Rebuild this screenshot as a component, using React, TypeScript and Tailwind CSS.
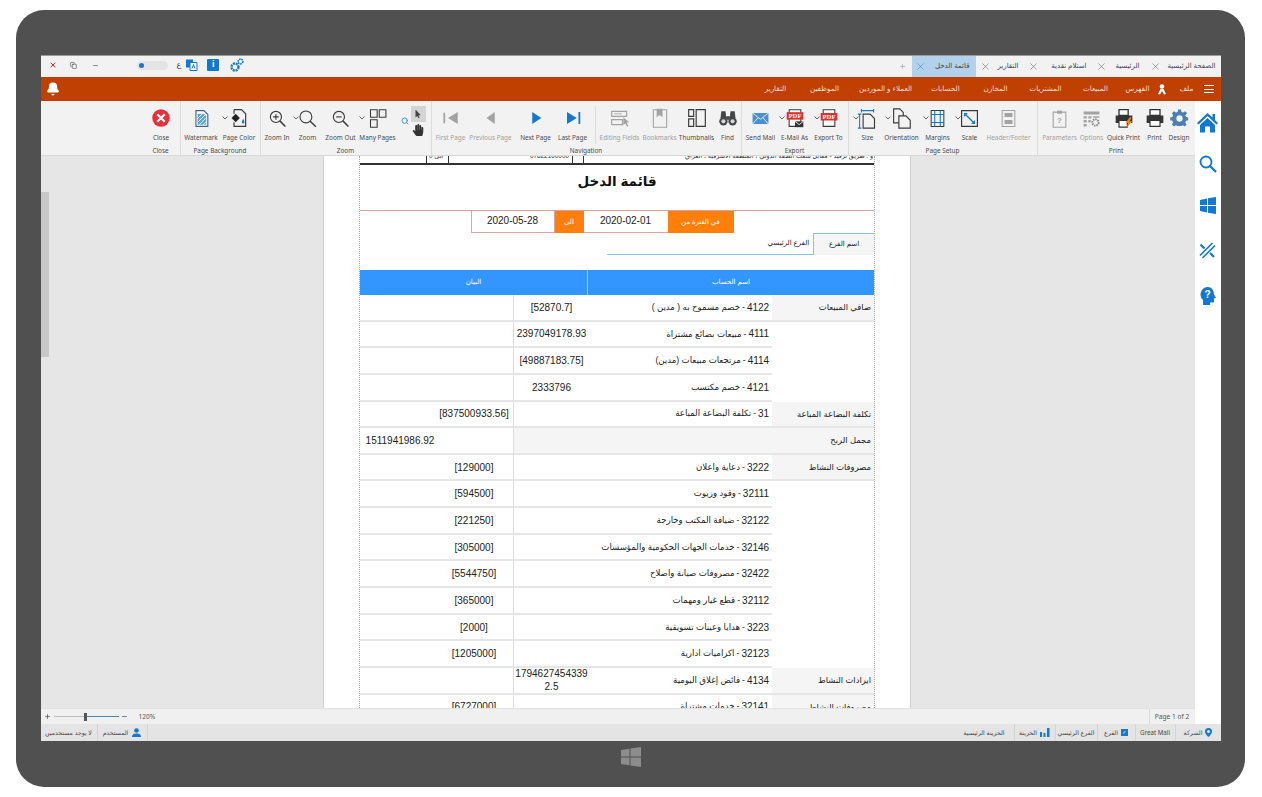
import { ReactNode } from "react";
import { Bell, Plus, Search, X, Minus, Copy } from "lucide-react";
import { FaHandPaper, FaMousePointer } from "react-icons/fa";

const BLUE = "#1278d0";
const DARK = "#3a3a3a";
const GREY = "#a3a3a3";

function Glyph({ children, size = 19 }: { children: ReactNode; size?: number }) {
  return (
    <svg width={size} height={size} viewBox="0 0 24 24" fill="none">
      {children}
    </svg>
  );
}

const Doc = ({ stroke = DARK }: { stroke?: string }) => <path d="M5 2h10l5 5v15H5z" stroke={stroke} strokeWidth="1.4" fill="#fff" />;

const icons: Record<string, ReactNode> = {
  close: (
    <Glyph size={20}>
      <circle cx="12" cy="12" r="10.5" fill="#e8303a" />
      <path d="M7.500 7.500l9 9M16.500 7.500l-9 9" stroke="#fff" strokeWidth="2.600" />
    </Glyph>
  ),
  watermark: (
    <Glyph>
      <Doc stroke="#44617a" />
      <path d="M7 6h8l3 3v11H7z" fill="#5aa6e6" />
      <path d="M7 12l6-6M7 17l10-10M9 20l9-9M14 20l4-4" stroke="#fff" strokeWidth="1.1" />
    </Glyph>
  ),
  pageColor: (
    <Glyph size={20}>
      <path d="M6 2h9l5 5v15H6V17M6 7V2" stroke={DARK} strokeWidth="1.4" />
      <path d="M8 7l5 5-5 5-5-5z" fill="#222" />
      <path d="M17 13c1 2 1.500 3 1.500 4a1.500 1.500 0 0 1-3 0c0-1 .5-2 1.500-4z" fill={BLUE} />
    </Glyph>
  ),
  zoomIn: (
    <Glyph>
      <circle cx="10" cy="10" r="7" stroke={DARK} strokeWidth="1.4" />
      <path d="M15 15l7 7" stroke={DARK} strokeWidth="1.8" />
      <path d="M6.500 10h7M10 6.500v7" stroke={DARK} strokeWidth="1.4" />
    </Glyph>
  ),
  zoom: (
    <Glyph>
      <circle cx="10" cy="10" r="7.500" stroke={DARK} strokeWidth="1.4" />
      <path d="M15.500 15.500l7 7" stroke={DARK} strokeWidth="1.8" />
    </Glyph>
  ),
  zoomOut: (
    <Glyph>
      <circle cx="10" cy="10" r="7" stroke={DARK} strokeWidth="1.4" />
      <path d="M15 15l7 7" stroke={DARK} strokeWidth="1.8" />
      <path d="M6.500 10h7" stroke={DARK} strokeWidth="1.4" />
    </Glyph>
  ),
  many: (
    <Glyph size={20}>
      <path d="M3 2h8v9H3zM13.500 2h8v9h-8zM3 14h8v9H3z" stroke={DARK} strokeWidth="1.3" />
    </Glyph>
  ),
  first: (
    <Glyph size={18}>
      <path d="M3 5v14" stroke={GREY} strokeWidth="2.400" />
      <path d="M21 4v16L8 12z" fill={GREY} />
    </Glyph>
  ),
  prev: (
    <Glyph size={18}>
      <path d="M17 4v16L6 12z" fill={GREY} />
    </Glyph>
  ),
  next: (
    <Glyph size={18}>
      <path d="M7 4v16l12-8z" fill={BLUE} />
    </Glyph>
  ),
  last: (
    <Glyph size={18}>
      <path d="M4 4v16l13-8z" fill={BLUE} />
      <path d="M20.500 4v16" stroke={BLUE} strokeWidth="2.400" />
    </Glyph>
  ),
  editing: (
    <Glyph size={20}>
      <path d="M2 4h18v6H2zM2 14h13v6H2z" stroke={GREY} strokeWidth="1.4" />
      <path d="M5 7h9" stroke={GREY} />
      <path d="M16 11l7 6-3 .5 2 4-1.500 1-2-4-2.500 2z" fill={GREY} />
    </Glyph>
  ),
  bookmark: (
    <Glyph size={20}>
      <path d="M4 2h16v21H4z" stroke={GREY} strokeWidth="1.3" />
      <path d="M8 1h7v10l-3.500-2.500L8 11z" fill={GREY} />
    </Glyph>
  ),
  thumbs: (
    <Glyph size={20}>
      <path d="M2 2h6v8H2zM2 13h6v9H2zM11 2h11v20H11z" stroke={DARK} strokeWidth="1.4" />
    </Glyph>
  ),
  find: (
    <Glyph size={20}>
      <circle cx="6.500" cy="16" r="5" fill="#444" />
      <circle cx="17.500" cy="16" r="5" fill="#444" />
      <path d="M4 4h5l1 8H3zM15 4h5l1 8h-7zM10 10h4v4h-4z" fill="#444" />
      <circle cx="6.500" cy="16" r="2.500" fill="#cfd8df" />
      <circle cx="17.500" cy="16" r="2.500" fill="#cfd8df" />
    </Glyph>
  ),
  mail: (
    <Glyph>
      <path d="M2 5h20v14H2z" fill="#4a8fd0" />
      <path d="M2 5l10 8 10-8M2 19l7-8M22 19l-7-8" stroke="#fff" strokeWidth="1" />
    </Glyph>
  ),
  mailAs: (
    <Glyph size={20}>
      <path d="M5 2h14v20H5z" stroke={DARK} strokeWidth="1.3" fill="#fff" />
      <path d="M2 5h20v9H2z" fill="#df2f2f" />
      <text x="12" y="12.500" textAnchor="middle" fontSize="8" fontWeight="700" fill="#fff" fontFamily="Liberation Serif, serif">PDF</text>
      <path d="M12 16h10v7H12z" fill="#333" />
      <path d="M12 16l5 4 5-4" stroke="#fff" strokeWidth="1" />
    </Glyph>
  ),
  exportTo: (
    <Glyph size={20}>
      <path d="M5 2h14v20H5z" stroke={DARK} strokeWidth="1.3" fill="#fff" />
      <path d="M2 6h20v9H2z" fill="#df2f2f" />
      <text x="12" y="13.500" textAnchor="middle" fontSize="8" fontWeight="700" fill="#fff" fontFamily="Liberation Serif, serif">PDF</text>
    </Glyph>
  ),
  size: (
    <Glyph size={21}>
      <path d="M5 1v4M19 1v4M5 3h14" stroke={BLUE} strokeWidth="1.2" />
      <path d="M1 7h4M1 23h4M3 7v16" stroke={BLUE} strokeWidth="1.2" />
      <path d="M7 7h8l5 5v11H7z" stroke={DARK} strokeWidth="1.3" />
    </Glyph>
  ),
  orientation: (
    <Glyph size={21}>
      <path d="M3 1h7l4 4v12H3z" stroke={DARK} strokeWidth="1.3" />
      <path d="M9 9h8l5 5v9H9z" stroke={DARK} strokeWidth="1.3" fill="#f2f2f2" />
    </Glyph>
  ),
  margins: (
    <Glyph>
      <path d="M4 2h16v20H4z" stroke={DARK} strokeWidth="1.3" />
      <path d="M4 7h16M4 17h16M8.500 2v20M15.500 2v20" stroke={BLUE} strokeWidth="1.3" />
    </Glyph>
  ),
  scale: (
    <Glyph>
      <path d="M2 2h20v20H2z" stroke={DARK} strokeWidth="1.5" />
      <path d="M6 6l12 12" stroke={BLUE} strokeWidth="1.5" />
      <path d="M5 5h5L5 10zM19 19h-5l5-5z" fill={BLUE} />
    </Glyph>
  ),
  header: (
    <Glyph>
      <path d="M4 2h16v20H4z" stroke={GREY} strokeWidth="1.3" />
      <path d="M7 5h10v5H7zM7 14h10v5H7z" fill={GREY} />
    </Glyph>
  ),
  params: (
    <Glyph>
      <path d="M4 4h16v19H4z" stroke={GREY} strokeWidth="1.4" />
      <path d="M9 2h6v4H9z" fill={GREY} />
      <text x="12" y="18" textAnchor="middle" fontSize="10" fontWeight="700" fill={GREY} fontFamily="Liberation Sans, sans-serif">?</text>
    </Glyph>
  ),
  options: (
    <Glyph>
      <path d="M2 3h20v4H2zM2 9h4v3H2zM8 9h4v3H8zM14 9h8v2h-8zM2 14h4v3H2zM8 14h3v3H8zM2 19h4v3H2z" fill={GREY} />
      <circle cx="17" cy="17" r="4" stroke="#8a8a8a" strokeWidth="2.400" strokeDasharray="2 1" />
    </Glyph>
  ),
  quick: (
    <Glyph size={20}>
      <path d="M6 2h11v7H6z" stroke="#333" strokeWidth="1.6" fill="#fff" />
      <path d="M2 9h20v9H2z" fill="#333" />
      <path d="M6 15h10v8H6z" stroke="#333" strokeWidth="1.4" fill="#fff" />
      <path d="M19 11l-5 7h3l-2 6 7-8h-3l2-5z" fill="#f08a1d" />
    </Glyph>
  ),
  print: (
    <Glyph size={20}>
      <path d="M6 2h12v7H6z" stroke="#333" strokeWidth="1.6" fill="#fff" />
      <path d="M2 9h20v9H2z" fill="#333" />
      <path d="M6 15h12v7H6z" stroke="#333" strokeWidth="1.4" fill="#fff" />
    </Glyph>
  ),
  design: (
    <Glyph size={21}>
      <path
        d="M10 1h4l.7 3.200 2.300 1 2.800-1.800 2.800 2.800L20 9l1 2.300 3 .7v4l-3 .7-1 2.300 1.800 2.800-2.800 2.800L17 22.800l-2.300 1L14 24h-4l-.7-.2L7 22.800l-2.800 1.800-2.800-2.800L3 19l-1-2.300-3-.7v-4l3-.7L3 9 1.400 6.200l2.800-2.800L7 5.200l2.300-1z"
        transform="translate(2.200 1) scale(.82)"
        fill="#4c7fb3"
      />
      <circle cx="12" cy="12" r="3.600" fill="#f2f2f2" />
    </Glyph>
  ),
};

function Item({ w, icon, label, muted, chevron }: { w: number; icon: string; label: string; muted?: boolean; chevron?: number }) {
  return (
    <div className="relative flex shrink-0 flex-col items-center" style={{ width: w }}>
      <div className="flex h-[24px] items-center justify-center">{icons[icon]}</div>
      <span className={`mt-[3px] whitespace-nowrap text-[6.4px] leading-[9px] ${muted ? "text-[#a0a0a0]" : "text-[#4a4a4a]"}`}>{label}</span>
      {chevron !== undefined && (
        <svg className="absolute top-[10px]" style={{ left: chevron - 3 }} width="6" height="4" viewBox="0 0 6 4" fill="none">
          <path d="M.5.5L3 3 5.500.5" stroke="#555" strokeWidth=".9" />
        </svg>
      )}
    </div>
  );
}

function Group({ w, label, children }: { w: number; label: string; children: ReactNode }) {
  return (
    <div className="flex h-full shrink-0 flex-col border-r border-[#dcdcdc] pt-[5px]" style={{ width: w }}>
      <div className="flex h-[40px]">{children}</div>
      <div className="text-center text-[6.4px] leading-[9px] text-[#4a4a4a]">{label}</div>
    </div>
  );
}

function Ribbon() {
  return (
    <div className="flex h-[55px] border-b border-[#d8d8d8] bg-[#f2f2f2] pl-[101px] font-['Noto_Sans','Liberation_Sans',sans-serif]">
      <Group w={39} label="Close">
        <Item w={39} icon="close" label="Close" />
      </Group>
      <Group w={80} label="Page Background">
        <Item w={41} icon="watermark" label="Watermark" />
        <Item w={35} icon="pageColor" label="Page Color" chevron={3} />
      </Group>
      <Group w={171} label="Zoom">
        <Item w={33} icon="zoomIn" label="Zoom In" />
        <Item w={28} icon="zoom" label="Zoom" chevron={2} />
        <Item w={38} icon="zoomOut" label="Zoom Out" />
        <Item w={36} icon="many" label="Many Pages" chevron={2} />
        <div className="flex w-[36px] items-start pl-[4px]">
          <div className="mt-[11px] flex w-[11px] justify-center">
            <Search size={8} color="#4b8fd0" strokeWidth={3} />
          </div>
          <div className="flex flex-col items-center">
            <div className="flex h-[16px] w-[15px] items-center justify-center bg-[#d4d4d4]">
              <FaMousePointer size={8} color="#444" />
            </div>
            <FaHandPaper size={12} className="mt-[2px]" color="#333" />
          </div>
        </div>
      </Group>
      <Group w={310} label="Navigation">
        <Item w={38} icon="first" label="First Page" muted />
        <Item w={42} icon="prev" label="Previous Page" muted />
        <Item w={48} icon="next" label="Next  Page" />
        <Item w={26} icon="last" label="Last  Page" />
        <div className="mb-[2px] ml-[9px] w-px bg-[#dcdcdc]" />
        <Item w={48} icon="editing" label="Editing Fields" muted />
        <Item w={32} icon="bookmark" label="Bookmarks" muted />
        <Item w={42} icon="thumbs" label="Thumbnails" />
        <Item w={20} icon="find" label="Find" />
      </Group>
      <Group w={107} label="Export">
        <Item w={38} icon="mail" label="Send Mail" />
        <Item w={30} icon="mailAs" label="E-Mail As" chevron={2} />
        <Item w={38} icon="exportTo" label="Export To" chevron={7} />
      </Group>
      <Group w={189} label="Page Setup">
        <Item w={38} icon="size" label="Size" chevron={7} />
        <Item w={30} icon="orientation" label="Orientation" chevron={1} />
        <Item w={42} icon="margins" label="Margins" chevron={9} />
        <Item w={22} icon="scale" label="Scale" chevron={-1} />
        <Item w={56} icon="header" label="Header/Footer" muted />
      </Group>
      <div className="flex h-full w-[157px] shrink-0 flex-col pt-[5px]">
        <div className="flex h-[40px]">
          <Item w={44} icon="params" label="Parameters" muted />
          <Item w={20} icon="options" label="Options" muted />
          <Item w={44} icon="quick" label="Quick Print" />
          <Item w={18} icon="print" label="Print" />
          <Item w={31} icon="design" label="Design" />
        </div>
        <div className="text-center text-[6.4px] leading-[9px] text-[#4a4a4a]">Print</div>
      </div>
    </div>
  );
}

type Row = { label?: string; code?: string; account?: string; value: string; col: 1 | 2 | 3; wide?: boolean };

const rows: Row[] = [
  { label: "صافي المبيعات", code: "4122", account: "خصم مسموح به ( مدين )", value: "[52870.7]", col: 3 },
  { code: "4111", account: "مبيعات بضائع مشتراة", value: "2397049178.93", col: 3 },
  { code: "4114", account: "مرتجعات مبيعات  (مدين)", value: "[49887183.75]", col: 3 },
  { code: "4121", account: "خصم مكتسب", value: "2333796", col: 3 },
  { label: "تكلفة البضاعة المباعة", code: "31", account: "تكلفة البضاعة المباعة", value: "[837500933.56]", col: 2 },
  { label: "مجمل الربح", value: "1511941986.92", col: 1, wide: true },
  { label: "مصروفات النشاط", code: "3222", account: "دعاية واعلان", value: "[129000]", col: 2 },
  { code: "32111", account: "وقود وزيوت", value: "[594500]", col: 2 },
  { code: "32122", account: "ضيافة المكتب وخارجة", value: "[221250]", col: 2 },
  { code: "32146", account: "خدمات الجهات الحكومية والمؤسسات", value: "[305000]", col: 2 },
  { code: "32422", account: "مصروفات صيانة واصلاح", value: "[5544750]", col: 2 },
  { code: "32112", account: "قطع غيار ومهمات", value: "[365000]", col: 2 },
  { code: "3223", account: "هدايا وعينات تسويقية", value: "[2000]", col: 2 },
  { code: "32123", account: "اكراميات ادارية", value: "[1205000]", col: 2 },
  { label: "ايرادات النشاط", code: "4134", account: "فائض إغلاق اليومية", value: "17946274543392.5", col: 3 },
  { label: "مصروفات النشاط", code: "32141", account: "خدمات مشتراة", value: "[6727000]", col: 2 },
];

function ValueCell({ w, value, className = "" }: { w: number; value?: string; className?: string }) {
  return (
    <div className={`flex shrink-0 items-center justify-center break-all text-center leading-[13px] ${className}`} style={{ width: w }}>
      {value}
    </div>
  );
}

function ReportRow({ row }: { row: Row }) {
  return (
    <div className="flex h-[26.65px] shrink-0 text-[10px] text-[#222]">
      <div className="flex w-[413px] border-b-2 border-[#e6e6e6]">
        <ValueCell w={75} value={row.col === 1 ? row.value : ""} className="pl-[5px]" />
        <ValueCell w={78} value={row.col === 2 ? row.value : ""} />
        {row.wide ? (
          <div className="flex-1 border-l border-[#dcdcdc] bg-[#f5f5f5]" />
        ) : (
          <div className="flex flex-1 border-l border-[#dcdcdc]">
            <ValueCell w={75} value={row.col === 3 ? row.value : ""} />
            <div dir="rtl" className="flex flex-1 items-center whitespace-nowrap pr-[3px] text-[8.6px]">
              <span className="text-[10px]">{row.code}</span>
              <span className="mx-[2px]">-</span>
              {row.account}
            </div>
          </div>
        )}
      </div>
      <div
        dir="rtl"
        className={`flex w-[102px] items-center pr-[3px] text-[8.4px] ${row.label ? "border-b-2 border-[#e6e6e6] bg-[#f5f5f5]" : ""}`}
      >
        {row.label}
      </div>
    </div>
  );
}

function Report() {
  return (
    <div className="flex h-full w-[516px] flex-col overflow-hidden border-x border-dotted border-[#aaa]">
      <div className="flex h-[9px] shrink-0 overflow-hidden border-b-2 border-[#333] text-[6.4px] leading-[9px] text-[#333]">
        <div className="w-[67px] border-r border-[#333]" />
        <div className="w-[22px] border-r border-[#333] pl-[2px] -mt-[5px]">الى 0</div>
        <div className="w-[124px] border-r border-[#333] pr-[3px] text-right -mt-[5px]">07822100000</div>
        <div className="w-[11px] border-r border-[#333]" />
        <div dir="rtl" className="flex-1 whitespace-nowrap pr-[1px] -mt-[5px]">و : طريق ترقيد - مقابل شعب الصفة الدولي ، المنطقة الاشرقية ، العراق</div>
      </div>
      <div dir="rtl" className="h-[45px] shrink-0 pt-[6px] text-center text-[13.5px] font-semibold leading-[22px] text-[#111]">
        قائمة الدخل
      </div>
      <div className="flex h-[23px] shrink-0 justify-center border-t border-[#d9a0a0] pr-[30px] text-[10px] text-[#222]">
        <div className="flex w-[84px] items-center justify-center border border-t-0 border-[#d8a8a0] pb-[2px]">2020-05-28</div>
        <div className="flex w-[29px] items-center justify-center bg-[#ff7f0a] text-[7px] text-[#fff]">الى</div>
        <div className="flex w-[84px] items-center justify-center border-b border-[#d8a8a0] pb-[2px]">2020-02-01</div>
        <div className="flex w-[66px] items-center justify-center bg-[#ff7f0a] text-[6.8px] text-[#fff]">في الفترة من</div>
      </div>
      <div className="flex h-[22px] shrink-0 pl-[247px] text-[7px] text-[#222]">
        <div className="flex w-[207px] items-center justify-end border-b border-[#8fc0f0] pr-[4px]">الفرع الرئيسي</div>
        <div className="flex w-[61px] items-center justify-center border-l border-t border-[#8fc0f0] bg-[#f5f5f5]">اسم الفرع</div>
      </div>
      <div className="mt-[15px] flex h-[25px] shrink-0 bg-[#3396ff] text-[7px] text-[#fff]">
        <div className="flex w-[228px] items-center justify-center border-r border-[#9ccbff]">البيان</div>
        <div className="flex flex-1 items-center justify-center">اسم الحساب</div>
      </div>
      {rows.map((row) => (
        <ReportRow key={row.value} row={row} />
      ))}
    </div>
  );
}

const tabs: { label: string; w: number; pr: number }[] = [
  { label: "التقارير", w: 48, pr: 9 },
  { label: "استلام نقدية", w: 68, pr: 9 },
  { label: "الرئيسية", w: 54, pr: 10 },
  { label: "الصفحة الرئيسية", w: 71, pr: 5 },
];

function TabBar() {
  return (
    <div className="flex h-[21px] shrink-0 items-center bg-[#f2f2f2] text-[#444]">
      <div className="mb-[3px] flex items-center">
        <div className="flex w-[22px] justify-center pl-[2px]">
          <X size={8} color="#c0302a" strokeWidth={3} />
        </div>
        <div className="flex w-[22px] justify-center">
          <Copy size={7} strokeWidth={2} />
        </div>
        <div className="flex w-[22px] justify-center">
          <Minus size={7} strokeWidth={2} />
        </div>
        <div className="ml-[30px] flex h-[9px] w-[31px] items-center rounded-full bg-[#e4e4e4] pl-[2px]">
          <div className="h-[5px] w-[5px] rounded-full bg-[#1278d0]" />
        </div>
        <span className="ml-[9px] text-[8px]">ع</span>
        <svg className="ml-[4px]" width="13" height="14" viewBox="0 0 13 13">
          <path d="M1 1h7v8H1z" fill="#1278d0" />
          <path d="M5 4h7v8H5z" fill="#fff" stroke="#1278d0" />
          <path d="M7 10l1.500-4L10 10" stroke="#1278d0" fill="none" />
        </svg>
        <div className="ml-[9px] flex h-[12px] w-[12px] items-center justify-center rounded-[1px] bg-[#1278d0] text-[9px] font-bold text-[#fff]">i</div>
        <svg className="ml-[10px]" width="16" height="16" viewBox="0 0 16 16" fill="none" stroke="#1278d0">
          <circle cx="6" cy="10" r="3.500" strokeWidth="2.400" strokeDasharray="2 .8" />
          <circle cx="11.500" cy="4.500" r="2.400" strokeWidth="1.600" strokeDasharray="1.500 .7" />
        </svg>
      </div>
      <div className="ml-auto flex h-full items-center text-[7px]">
        <Plus size={7} color="#999" className="mr-[6px]" />
        <div dir="rtl" className="flex h-full w-[64px] items-center justify-between bg-[#b3d1ea] pl-[3px] pr-[6px]">
          <span className="whitespace-nowrap">قائمة الدخل</span>
          <X size={11} strokeWidth={1} color="#1278d0" />
        </div>
        <div className="w-[4px]" />
        {tabs.map((tab) => (
          <div key={tab.label} className="flex h-full items-center justify-between" style={{ width: tab.w, paddingRight: tab.pr }}>
            <X size={11} strokeWidth={1} color="#444" />
            <span dir="rtl" className="whitespace-nowrap">
              {tab.label}
            </span>
          </div>
        ))}
      </div>
    </div>
  );
}

const menu: [number, string][] = [
  [48, "التقارير"],
  [50, "الموظفين"],
  [72, "العملاء و الموردين"],
  [48, "الحسابات"],
  [52, "المخازن"],
  [48, "المشتريات"],
  [52, "المبيعات"],
  [32, "الفهرس"],
];

function MenuBar() {
  return (
    <div className="flex h-[24px] shrink-0 items-center bg-[#bf4000] text-[7.2px] text-[#f4dcd0]">
      <Bell size={14} fill="#fff" color="#fff" className="ml-[5px]" />
      <div className="ml-auto flex items-center pr-[7px]">
        {menu.map(([w, label]) => (
          <div key={label} className="text-center" style={{ width: w }}>
            {label}
          </div>
        ))}
        <svg className="mx-[3px]" width="10" height="11" viewBox="0 0 10 11" fill="#fff">
          <circle cx="5" cy="2.500" r="2.300" />
          <path d="M3.500 5L1 10l2 .5L5 7l2 3.500 2-.5L6.500 5z" />
        </svg>
        <div className="w-[34px] text-center">ملف</div>
        <div className="flex w-[10px] flex-col gap-[2.500px]">
          <div className="h-px bg-[#fff]" />
          <div className="h-px bg-[#fff]" />
          <div className="h-px bg-[#fff]" />
        </div>
      </div>
    </div>
  );
}

function SideBar() {
  return (
    <div className="flex w-[26px] shrink-0 flex-col items-center bg-[#fff] pt-[11px]">
      <svg width="21" height="21" viewBox="0 0 21 21" fill={BLUE}>
        <path d="M10.500 1L0 11l1.500 1.500 9-8.500 9 8.500L21 11l-3-3V2h-2.500v3.500z" />
        <path d="M3 13l7.500-7 7.500 7v7.500h-5v-6H8v6H3z" />
      </svg>
      <svg className="mt-[22px]" width="18" height="18" viewBox="0 0 18 18" fill="none" stroke={BLUE}>
        <circle cx="7" cy="7" r="5.500" strokeWidth="1.800" />
        <path d="M11 11l6 6" strokeWidth="2.400" />
      </svg>
      <svg className="mt-[24px]" width="16" height="17" viewBox="0 0 16 17" fill={BLUE}>
        <path d="M0 3l7-1.500V8H0zM8 1.300L16 0v8H8zM0 9h7v6.500L0 14zM8 9h8v8l-8-1.300z" />
      </svg>
      <svg className="mt-[28px]" width="17" height="17" viewBox="0 0 17 17" fill="none" stroke={BLUE} strokeWidth="1.600">
        <path d="M1 13.500L13.500 1M3.500 16L16 3.500" />
        <path d="M1.500 2.500l4 4M11 11l4 4" strokeWidth="2.200" />
      </svg>
      <svg className="mt-[28px]" width="16" height="18" viewBox="0 0 16 18">
        <path d="M8 0a7.500 7.500 0 0 0-5 13v5h7v-2.500h2.500c1 0 1.500-.5 1.500-1.500v-2.500l2-.5-2-3.500C14 3 11.500 0 8 0z" fill={BLUE} />
        <text x="7.500" y="11" textAnchor="middle" fontSize="10" fontWeight="700" fill="#fff" fontFamily="Liberation Sans, sans-serif">?</text>
      </svg>
    </div>
  );
}

function ZoomBar() {
  return (
    <div className="flex h-[16px] shrink-0 items-center border-t border-[#e2e2e2] bg-[#f0f0f0] font-['Noto_Sans',sans-serif] text-[6.6px] text-[#555]">
      <Plus size={7} strokeWidth={2.500} className="ml-[3px]" />
      <div className="ml-[3px] flex h-[8px] w-[65px] items-center">
        <div className="h-px w-[30px] bg-[#bbb]" />
        <div className="h-[8px] w-[3px] bg-[#555]" />
        <div className="h-px w-[32px] bg-[#4a85c0]" />
      </div>
      <Minus size={7} strokeWidth={2.500} className="ml-[2px]" />
      <span className="ml-[11px]">120%</span>
      <div className="ml-auto flex h-full w-[46px] items-center justify-center border-l border-[#dcdcdc]">Page 1 of 2</div>
    </div>
  );
}

function StatusCell({ w, children }: { w: number; children: ReactNode }) {
  return (
    <div dir="rtl" className="flex h-full shrink-0 items-center justify-center gap-[3px] whitespace-nowrap border-l border-[#d4d4d4] first:border-l-0" style={{ width: w }}>
      {children}
    </div>
  );
}

function StatusBar() {
  return (
    <div className="flex h-[17px] shrink-0 items-center bg-[#e4e4e4] text-[6.2px] text-[#444]">
      <div className="flex h-full w-[57px] items-center justify-center whitespace-nowrap border-r border-[#d4d4d4]">لا يوجد مستخدمين</div>
      <div dir="rtl" className="flex h-full w-[50px] items-center justify-center gap-[4px] border-r border-[#d4d4d4]">
        <svg width="9" height="9" viewBox="0 0 9 9" fill={BLUE}>
          <circle cx="4.500" cy="2.500" r="2.300" />
          <path d="M0 9c0-2.500 1.500-3.500 4.500-3.500S9 6.500 9 9z" />
        </svg>
        المستخدم
      </div>
      <div className="ml-auto flex h-full">
        <StatusCell w={59}>الخزينة الرئيسية</StatusCell>
        <StatusCell w={41}>
          <svg width="10" height="9" viewBox="0 0 10 9" fill={BLUE}>
            <path d="M0 4h2v5H0zM3.500 5h2v4h-2zM7 0h2.500v9H7z" />
          </svg>
          الخزينة
        </StatusCell>
        <StatusCell w={42}>الفرع الرئيسي</StatusCell>
        <StatusCell w={38}>
          <div className="flex h-[7px] w-[7px] items-center justify-center bg-[#1278d0] text-[5px] leading-none text-[#fff]">✓</div>
          الفرع
        </StatusCell>
        <StatusCell w={40}>
          <span className="font-['Noto_Sans',sans-serif]">Great Mall</span>
        </StatusCell>
        <StatusCell w={46}>
          <svg width="7" height="9" viewBox="0 0 7 9" fill={BLUE}>
            <path d="M3.500 0A3.500 3.500 0 0 0 0 3.500C0 6 3.500 9 3.500 9S7 6 7 3.500A3.500 3.500 0 0 0 3.500 0zm0 5a1.500 1.500 0 1 1 0-3 1.500 1.500 0 0 1 0 3z" />
          </svg>
          الشركة
        </StatusCell>
      </div>
    </div>
  );
}

export default function App() {
  return (
    <div className="h-[797px] w-[1262px] overflow-hidden bg-[#fff] pl-[16px] pt-[10px] font-['Liberation_Sans','DejaVu_Sans',sans-serif]">
      <div className="flex h-[777px] w-[1229px] flex-col items-center rounded-[28px] bg-[#505050] pt-[45px]">
        <div className="flex h-[686px] w-[1180px] shrink-0 flex-col border-t border-[#9a9a9a] bg-[#e6e6e6]">
          <TabBar />
          <MenuBar />
          <div className="flex min-h-0 flex-1">
            <div className="flex w-[1154px] flex-col">
              <Ribbon />
              <div className="flex min-h-0 flex-1 overflow-hidden">
                <div className="w-[8px] shrink-0 pt-[36px]">
                  <div className="h-[165px] bg-[#c8c8c8]" />
                </div>
                <div className="ml-[274px] flex w-[588px] shrink-0 justify-center border-x border-[#d0d0d0] bg-[#fff] pl-px">
                  <Report />
                </div>
              </div>
              <ZoomBar />
            </div>
            <SideBar />
          </div>
          <StatusBar />
        </div>
        <svg className="mt-[6px]" width="20" height="20" viewBox="0 0 20 20" fill="#8c8c8c">
          <path d="M0 3l8.500-1.200V9.500H0zM9.500 1.600L20 0v9.500H9.500zM0 10.500h8.500v7.700L0 17zM9.500 10.500H20V20L9.500 18.400z" />
        </svg>
      </div>
    </div>
  );
}
